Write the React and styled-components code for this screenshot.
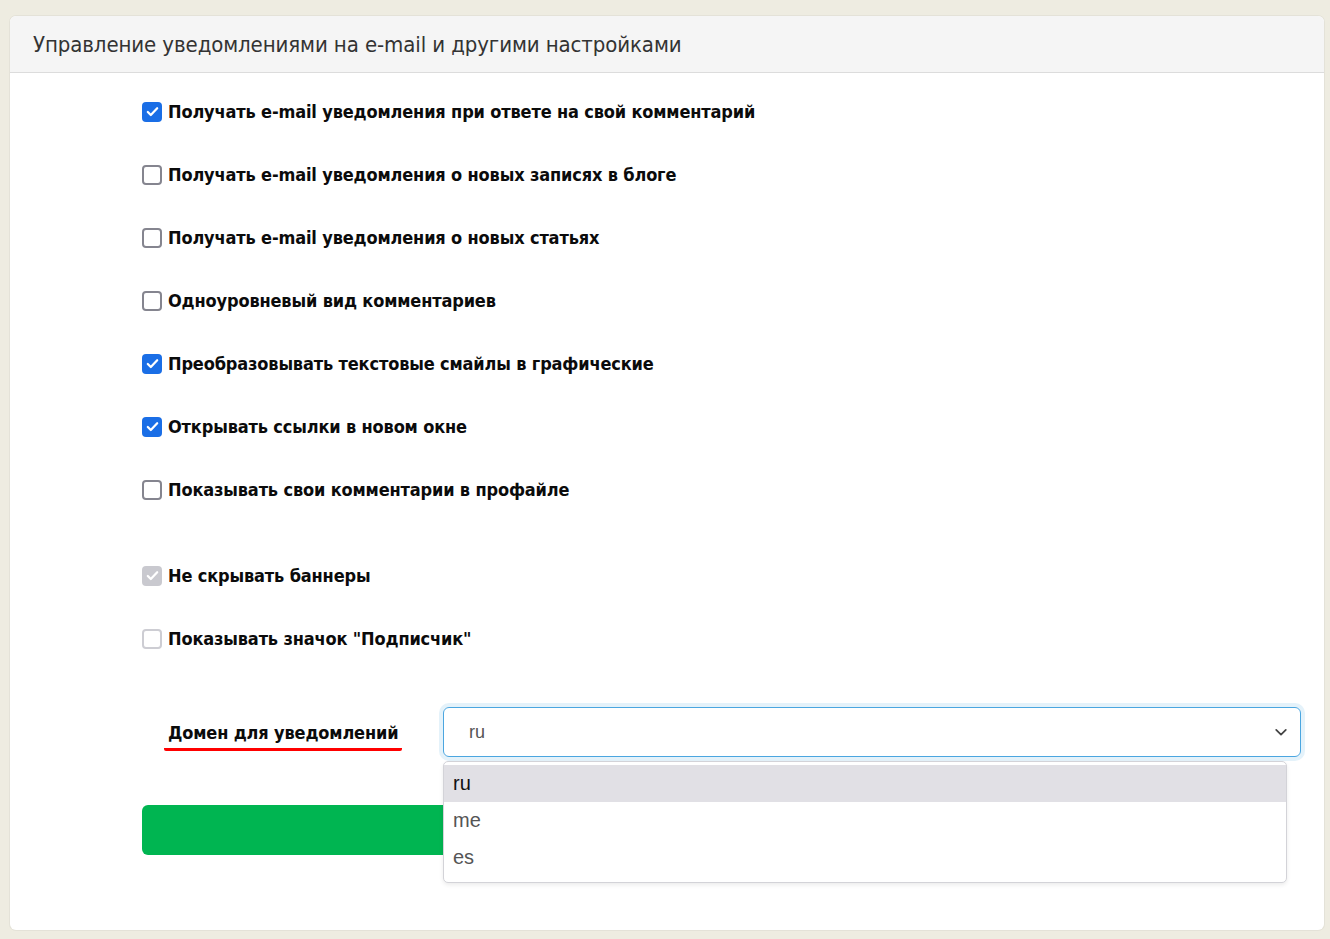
import React from "react"
import styled, { createGlobalStyle } from "styled-components"

const GlobalStyle = createGlobalStyle`
  html, body {
    margin: 0;
    padding: 0;
    background: #eeece1;
  }
  body {
    font-family: "DejaVu Sans Condensed", "DejaVu Sans", sans-serif;
  }
`

const options = [
  { label: "Получать e-mail уведомления при ответе на свой комментарий", checked: true },
  { label: "Получать e-mail уведомления о новых записях в блоге" },
  { label: "Получать e-mail уведомления о новых статьях" },
  { label: "Одноуровневый вид комментариев" },
  { label: "Преобразовывать текстовые смайлы в графические", checked: true },
  { label: "Открывать ссылки в новом окне", checked: true },
  { label: "Показывать свои комментарии в профайле" },
]

const locked = [
  { label: "Не скрывать баннеры", checked: true },
  { label: "Показывать значок \"Подписчик\"" },
]

const domains = ["ru", "me", "es"]

const Check = ({ checked, disabled }) => (
  <Box checked={checked} disabled={disabled}>
    {checked && (
      <svg width="15" height="15" viewBox="0 0 16 16">
        <path
          d="M3 8.5l3.2 3.2L13 4.6"
          fill="none"
          stroke="#fff"
          strokeWidth="2.4"
          strokeLinecap="round"
          strokeLinejoin="round"
        />
      </svg>
    )}
  </Box>
)

const App = () => {
  return (
    <Page>
      <GlobalStyle />
      <Card>
        <CardHeader>Управление уведомлениями на e-mail и другими настройками</CardHeader>
        <CardBody>
          {options.map((o) => (
            <Row key={o.label}>
              <Check checked={o.checked} />
              <Label>{o.label}</Label>
            </Row>
          ))}
          <Spacer />
          {locked.map((o) => (
            <Row key={o.label}>
              <Check checked={o.checked} disabled />
              <Label>{o.label}</Label>
            </Row>
          ))}
          <DomainRow>
            <DomainCell>
              <DomainLabel>Домен для уведомлений</DomainLabel>
            </DomainCell>
            <SelectWrap>
              <Select>
                <span>ru</span>
                <svg width="14" height="14" viewBox="0 0 16 16">
                  <path
                    d="M2.5 5.5L8 11l5.5-5.5"
                    fill="none"
                    stroke="#444"
                    strokeWidth="2"
                    strokeLinecap="round"
                    strokeLinejoin="round"
                  />
                </svg>
              </Select>
              <Menu>
                {domains.map((d, i) => (
                  <MenuItem key={d} active={i === 0}>
                    {d}
                  </MenuItem>
                ))}
              </Menu>
            </SelectWrap>
          </DomainRow>
          <SaveButton />
        </CardBody>
      </Card>
    </Page>
  )
}

export default App

const Page = styled.div`
  padding: 16px 6px 9px 10px;
`

const Card = styled.div`
  background: #fff;
  border-radius: 6px;
  box-shadow: 0 0 0 1px #e4e2d8;
`

const CardHeader = styled.div`
  background: #f5f5f5;
  border-bottom: 1px solid #dcdcdc;
  border-radius: 6px 6px 0 0;
  height: 57px;
  box-sizing: border-box;
  padding: 0 23px;
  display: flex;
  align-items: center;
  font-size: 22px;
  letter-spacing: -0.1px;
  color: #333;
`

const CardBody = styled.div`
  padding: 7px 23px 75px 132px;
  display: flex;
  flex-direction: column;
`

const Row = styled.label`
  display: flex;
  align-items: center;
  height: 63px;
  gap: 6px;
`

const Box = styled.span`
  width: 20px;
  height: 20px;
  box-sizing: border-box;
  border-radius: 4px;
  display: flex;
  align-items: center;
  justify-content: center;
  flex-shrink: 0;
  background: ${(p) => (p.checked ? (p.disabled ? "#c9c9cf" : "#1a6ee6") : "#fff")};
  border: ${(p) =>
    p.checked ? "none" : `2px solid ${p.disabled ? "#cdcdd3" : "#85858f"}`};
`

const Label = styled.span`
  font-size: 18px;
  font-weight: bold;
  letter-spacing: -0.15px;
  color: #0b0b0b;
`

const Spacer = styled.div`
  height: 23px;
`

const DomainRow = styled.div`
  display: flex;
  align-items: center;
  margin-top: 37px;
`

const DomainCell = styled.div`
  width: 301px;
  padding-left: 22px;
  box-sizing: border-box;
`

const DomainLabel = styled.span`
  display: inline-block;
  padding: 0 4px 5px;
  border-bottom: 3px solid #f00;
  border-radius: 2px;
  margin-top: 8px;
  font-size: 18px;
  font-weight: bold;
  letter-spacing: -0.15px;
  color: #0b0b0b;
`

const SelectWrap = styled.div`
  position: relative;
  flex: 1;
`

const Select = styled.div`
  height: 50px;
  box-sizing: border-box;
  border: 1px solid #4ba6e0;
  border-radius: 6px;
  box-shadow: 0 0 0 4px rgba(74, 166, 224, 0.15);
  display: flex;
  align-items: center;
  justify-content: space-between;
  padding: 0 12px 0 25px;
  font-family: "Liberation Sans", Arial, sans-serif;
  font-size: 18px;
  color: #555;
`

const Menu = styled.div`
  position: absolute;
  top: 54px;
  left: 0;
  right: 14px;
  background: #fff;
  border: 1px solid #d3d3d8;
  border-radius: 5px;
  box-shadow: 0 2px 4px rgba(0, 0, 0, 0.08);
  padding: 3px 0 6px;
  z-index: 2;
`

const MenuItem = styled.div`
  height: 37px;
  display: flex;
  align-items: center;
  padding-left: 9px;
  font-family: "Liberation Sans", Arial, sans-serif;
  font-size: 20px;
  color: ${(p) => (p.active ? "#111" : "#555")};
  background: ${(p) => (p.active ? "#e1e0e5" : "transparent")};
`

const SaveButton = styled.button`
  margin-top: 48px;
  width: 600px;
  height: 50px;
  border: none;
  border-radius: 6px;
  background: #00b551;
`
